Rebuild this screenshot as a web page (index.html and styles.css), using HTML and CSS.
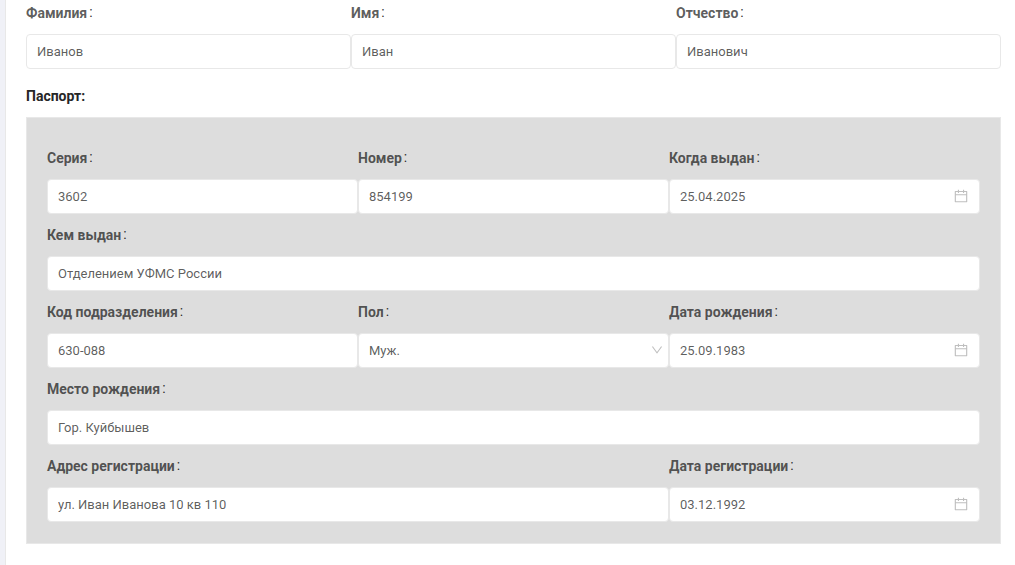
FILE: index.html
```html
<!DOCTYPE html>
<html lang="ru">
<head>
<meta charset="utf-8">
<title>Паспортные данные</title>
<link rel="stylesheet" href="styles.css">
</head>
<body>
<svg class="sprite" aria-hidden="true">
  <symbol id="calendar" viewBox="64 64 896 896"><path d="M880 184H712v-64c0-4.400-3.600-8-8-8h-56c-4.400 0-8 3.600-8 8v64H384v-64c0-4.400-3.600-8-8-8h-56c-4.400 0-8 3.600-8 8v64H144c-17.700 0-32 14.300-32 32v664c0 17.700 14.300 32 32 32h736c17.700 0 32-14.300 32-32V216c0-17.700-14.300-32-32-32zm-40 656H184V460h656v380zM184 392V256h128v48c0 4.400 3.600 8 8 8h56c4.400 0 8-3.600 8-8v-48h256v48c0 4.400 3.600 8 8 8h56c4.400 0 8-3.600 8-8v-48h128v136H184z"/></symbol>
  <symbol id="down" viewBox="64 64 896 896"><path d="M884 256h-75c-5.100 0-9.900 2.500-12.900 6.600L512 654.200 227.900 262.600c-3-4.100-7.800-6.600-12.900-6.600h-75c-6.500 0-10.300 7.400-6.500 12.700l352.600 486.100c12.800 17.600 39 17.600 51.700 0l352.600-486.100c3.900-5.300.1-12.700-6.400-12.700z"/></symbol>
</svg>
<main class="card">
  <form>
    <div class="row person">
      <div class="field"><label class="label" for="surname">Фамилия<span class="colon">:</span></label><input class="input" id="surname" type="text" value="Иванов"></div>
      <div class="field"><label class="label" for="name">Имя<span class="colon">:</span></label><input class="input" id="name" type="text" value="Иван"></div>
      <div class="field"><label class="label" for="patronymic">Отчество<span class="colon">:</span></label><input class="input" id="patronymic" type="text" value="Иванович"></div>
    </div>
    <h2 class="title">Паспорт:</h2>
    <section class="panel">
      <div class="row">
        <div class="field"><label class="label" for="series">Серия<span class="colon">:</span></label><input class="input" id="series" type="text" value="3602"></div>
        <div class="field"><label class="label" for="number">Номер<span class="colon">:</span></label><input class="input" id="number" type="text" value="854199"></div>
        <div class="field"><label class="label" for="issued">Когда выдан<span class="colon">:</span></label><div class="control"><input class="input" id="issued" type="text" value="25.04.2025"><svg class="icon calendar"><use href="#calendar"/></svg></div></div>
        <div class="field full"><label class="label" for="issuer">Кем выдан<span class="colon">:</span></label><input class="input" id="issuer" type="text" value="Отделением УФМС России"></div>
        <div class="field"><label class="label" for="code">Код подразделения<span class="colon">:</span></label><input class="input" id="code" type="text" value="630-088"></div>
        <div class="field"><label class="label" for="sex">Пол<span class="colon">:</span></label><div class="control"><select class="input" id="sex"><option>Муж.</option><option>Жен.</option></select><svg class="icon down"><use href="#down"/></svg></div></div>
        <div class="field"><label class="label" for="birth">Дата рождения<span class="colon">:</span></label><div class="control"><input class="input" id="birth" type="text" value="25.09.1983"><svg class="icon calendar"><use href="#calendar"/></svg></div></div>
        <div class="field full"><label class="label" for="place">Место рождения<span class="colon">:</span></label><input class="input" id="place" type="text" value="Гор. Куйбышев"></div>
        <div class="field wide"><label class="label" for="address">Адрес регистрации<span class="colon">:</span></label><input class="input" id="address" type="text" value="ул. Иван Иванова 10 кв 110"></div>
        <div class="field"><label class="label" for="registered">Дата регистрации<span class="colon">:</span></label><div class="control"><input class="input" id="registered" type="text" value="03.12.1992"><svg class="icon calendar"><use href="#calendar"/></svg></div></div>
      </div>
    </section>
  </form>
</main>
</body>
</html>
```
FILE: styles.css
```css
* {
  box-sizing: border-box;
}

body {
  display: flex;
  min-height: 100vh;
  margin: 0;
  padding-left: 5px;
  background: #f0f1f7;
  color: rgba(0, 0, 0, 0.65);
  font-family: Roboto, sans-serif;
  font-size: 14px;
  overflow: hidden;
}

.sprite {
  position: absolute;
  width: 0;
  height: 0;
}

.card {
  flex: 1;
  padding: 0 14px 21px 20px;
  border-left: 1px solid #e8e8e8;
  background: #fff;
}

.row {
  display: grid;
  grid-template-columns: repeat(3, minmax(0, 1fr));
}

.person {
  margin-top: -8px;
}

.full {
  grid-column: span 3;
}

.wide {
  grid-column: span 2;
}

.label {
  display: block;
  padding: 10px 0;
  font-weight: 700;
  line-height: 22px;
}

.colon {
  margin-left: 2px;
  color: rgba(0, 0, 0, 0.85);
  font-weight: 400;
  line-height: 1;
  vertical-align: 1px;
}

.input {
  display: block;
  width: 100%;
  height: 35px;
  margin: 0;
  padding: 0 10px;
  border: 1px solid #e8e8e8;
  border-radius: 4px;
  background: #fff;
  color: rgba(0, 0, 0, 0.65);
  font: 13px Roboto, sans-serif;
  appearance: none;
}

.control {
  position: relative;
}

.icon {
  position: absolute;
  top: 0;
  bottom: 1px;
  margin: auto 0;
  fill: #bfbfbf;
  pointer-events: none;
}

.calendar {
  right: 12px;
  width: 14px;
  height: 14px;
}

.down {
  right: 6px;
  width: 12px;
  height: 12px;
}

.title {
  margin: 16px 0 10px;
  color: #262626;
  font-size: 14px;
  font-weight: 700;
  line-height: 22px;
}

.panel {
  padding: 19px 20px 21px;
  border: 1px solid #e8e8e8;
  background: #ddd;
}
```
